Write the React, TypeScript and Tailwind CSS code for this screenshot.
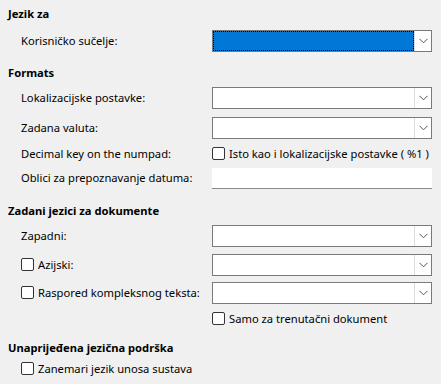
import React from 'react';

function Chevron() {
  return (
    <svg width="9" height="6" viewBox="0 0 9 6" className="block">
      <path d="M0.5 0.8 L4.5 4.8 L8.5 0.8" fill="none" stroke="#555" strokeWidth="1" />
    </svg>
  );
}

function Dropdown({ focused = false }: { focused?: boolean }) {
  return (
    <div className="w-[220px] h-[22px] flex border border-[#7a7a7a] bg-white">
      {focused ? (
        <div className="flex-1 bg-[#0078d7] border border-dotted border-black" />
      ) : (
        <div className="flex-1" />
      )}
      <div className="w-[17px] flex items-center justify-center border-l border-[#dcdcdc]">
        <Chevron />
      </div>
    </div>
  );
}

function Box() {
  return <span className="inline-block w-[13px] h-[13px] border border-[#333] rounded-[2px] bg-white shrink-0" />;
}

function Check({ label }: { label: string }) {
  return (
    <div className="flex items-center gap-[4px] whitespace-nowrap">
      <Box />
      <span>{label}</span>
    </div>
  );
}

function Row({ label, children, className = '' }: { label: React.ReactNode; children?: React.ReactNode; className?: string }) {
  return (
    <div className={`flex items-center h-[22px] pl-[13px] ${className}`}>
      <div className="flex-1 whitespace-nowrap">{label}</div>
      <div className="w-[220px] shrink-0">{children}</div>
    </div>
  );
}

function Header({ children, className = '' }: { children: React.ReactNode; className?: string }) {
  return <div className={`h-4 leading-4 font-bold ${className}`}>{children}</div>;
}

export default function App() {
  return (
    <div
      className="w-[441px] h-[384px] bg-[#f0f0f0] text-[11.2px] text-black pl-2 pr-[9px] pt-[6px] overflow-hidden"
      style={{ fontFamily: '"Noto Sans", "Open Sans", sans-serif' }}
    >
      <Header>Jezik za</Header>
      <Row label="Korisničko sučelje:" className="mt-2">
        <Dropdown focused />
      </Row>

      <Header className="mt-[13px]">Formats</Header>
      <Row label="Lokalizacijske postavke:" className="mt-[6px]">
        <Dropdown />
      </Row>
      <Row label="Zadana valuta:" className="mt-2">
        <Dropdown />
      </Row>
      <Row label="Decimal key on the numpad:" className="mt-1">
        <Check label="Isto kao i lokalizacijske postavke ( %1 )" />
      </Row>
      <Row label="Oblici za prepoznavanje datuma:" className="mt-[2px]">
        <div className="h-[21px] bg-white border-b border-[#8a8a8a]" />
      </Row>

      <Header className="mt-[14px]">Zadani jezici za dokumente</Header>
      <Row label="Zapadni:" className="mt-[6px]">
        <Dropdown />
      </Row>
      <Row label={<Check label="Azijski:" />} className="mt-[7px]">
        <Dropdown />
      </Row>
      <Row label={<Check label="Raspored kompleksnog teksta:" />} className="mt-[6px]">
        <Dropdown />
      </Row>
      <Row label="" className="mt-1">
        <Check label="Samo za trenutačni dokument" />
      </Row>

      <Header className="mt-[10px]">Unaprijeđena jezična podrška</Header>
      <div className="flex items-center h-[22px] pl-[13px] mt-[2px]">
        <Check label="Zanemari jezik unosa sustava" />
      </div>
    </div>
  );
}
